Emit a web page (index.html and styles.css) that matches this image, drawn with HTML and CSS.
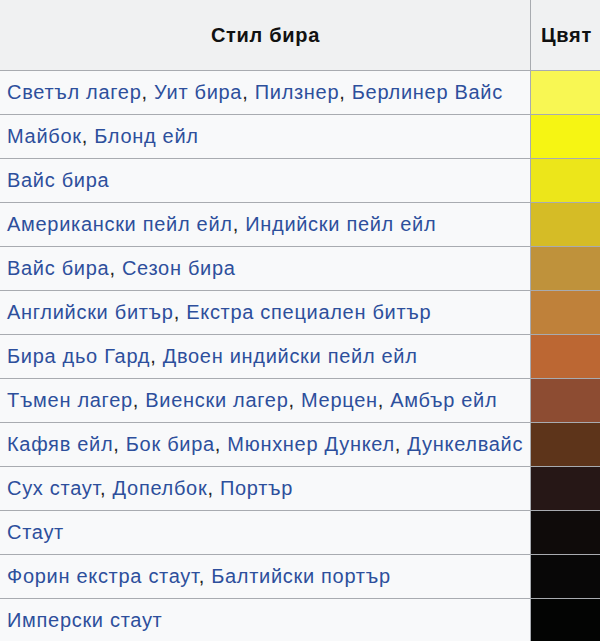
FILE: index.html
```html
<!DOCTYPE html>
<html lang="bg">
<head>
<meta charset="utf-8">
<link rel="stylesheet" href="styles.css">
</head>
<body>
<table class="beer">
  <thead>
    <tr><th class="style-col">Стил бира</th><th class="color-col">Цвят</th></tr>
  </thead>
  <tbody>
    <tr><td><a>Светъл лагер</a>, <a>Уит бира</a>, <a>Пилзнер</a>, <a>Берлинер Вайс</a></td><td class="sw" style="background:#F8F753"></td></tr>
    <tr><td><a>Майбок</a>, <a>Блонд ейл</a></td><td class="sw" style="background:#F6F513"></td></tr>
    <tr><td><a>Вайс бира</a></td><td class="sw" style="background:#ECE61A"></td></tr>
    <tr><td><a>Американски пейл ейл</a>, <a>Индийски пейл ейл</a></td><td class="sw" style="background:#D5BC26"></td></tr>
    <tr><td><a>Вайс бира</a>, <a>Сезон бира</a></td><td class="sw" style="background:#BF923B"></td></tr>
    <tr><td><a>Английски битър</a>, <a>Екстра специален битър</a></td><td class="sw" style="background:#BF813A"></td></tr>
    <tr><td><a>Бира дьо Гард</a>, <a>Двоен индийски пейл ейл</a></td><td class="sw" style="background:#BC6733"></td></tr>
    <tr><td><a>Тъмен лагер</a>, <a>Виенски лагер</a>, <a>Мерцен</a>, <a>Амбър ейл</a></td><td class="sw" style="background:#8D4C32"></td></tr>
    <tr><td><a>Кафяв ейл</a>, <a>Бок бира</a>, <a>Мюнхнер Дункел</a>, <a>Дункелвайс</a></td><td class="sw" style="background:#5D341A"></td></tr>
    <tr><td><a>Сух стаут</a>, <a>Допелбок</a>, <a>Портър</a></td><td class="sw" style="background:#261716"></td></tr>
    <tr><td><a>Стаут</a></td><td class="sw" style="background:#0F0B0A"></td></tr>
    <tr><td><a>Форин екстра стаут</a>, <a>Балтийски портър</a></td><td class="sw" style="background:#080707"></td></tr>
    <tr><td><a>Имперски стаут</a></td><td class="sw" style="background:#030403"></td></tr>
  </tbody>
</table>
</body>
</html>
```
FILE: styles.css
```css
html, body {
  margin: 0;
  padding: 0;
  background: #ffffff;
  overflow: hidden;
}
.beer {
  border-collapse: collapse;
  margin: -1px 0 0 -1px;
  font-family: "Liberation Sans", Arial, sans-serif;
  font-size: 20px;
  letter-spacing: 0.7px;
  color: #222;
  background: #f8f9fa;
  table-layout: fixed;
  width: 622px;
}
.beer th, .beer td {
  border: 1px solid #a8abb0;
  padding: 0 6px 0 7px;
  text-align: left;
  white-space: nowrap;
  overflow: hidden;
}
.beer th {
  background: #f0f1f2;
  height: 70px;
  font-weight: bold;
  text-align: center;
  color: #111;
}
.beer th.style-col { width: 517px; }
.beer th.color-col { text-align: left; padding-left: 10px; }
.beer td { height: 43px; }
.beer a { color: #2d4f9c; }
.beer td.sw { padding: 0; }
```
